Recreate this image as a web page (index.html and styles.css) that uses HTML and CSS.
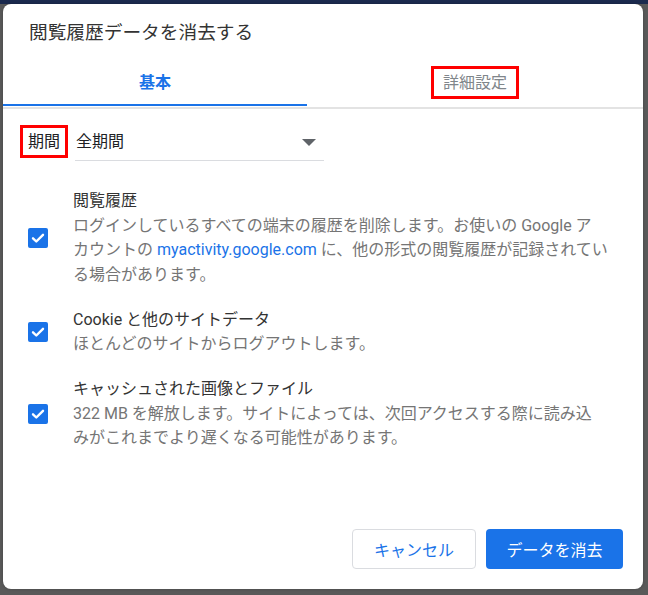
FILE: index.html
```html
<!DOCTYPE html>
<html lang="ja">
<head>
  <meta charset="UTF-8" />
  <title>閲覧履歴データを消去する</title>
  <link rel="stylesheet" href="styles.css">
</head>
<body>
  <div class="page-top"></div>

  <div class="dialog">
    <div class="dialog-title">閲覧履歴データを消去する</div>

    <div class="tabs">
      <div class="tab tab-basic active">基本</div>
      <div class="tab tab-advanced"><span class="mark mark-tab">詳細設定</span></div>
    </div>

    <div class="period-row">
      <span class="mark mark-label">期間</span>
      <div class="select">
        <span>全期間</span>
        <span class="arrow"></span>
      </div>
    </div>

    <div class="items">
      <div class="item">
        <div class="checkbox">
          <svg viewBox="0 0 20 20"><path d="M5 10.3l3.3 3.2L15 6.8" fill="none" stroke="#fff" stroke-width="2.4" stroke-linecap="round" stroke-linejoin="round"/></svg>
        </div>
        <div class="item-text">
          <div class="item-title">閲覧履歴</div>
          <div class="item-desc">ログインしているすべての端末の履歴を削除します。お使いの Google ア<br>カウントの <span class="link">myactivity.google.com</span> に、他の形式の閲覧履歴が記録されてい<br>る場合があります。</div>
        </div>
      </div>

      <div class="item">
        <div class="checkbox">
          <svg viewBox="0 0 20 20"><path d="M5 10.3l3.3 3.2L15 6.8" fill="none" stroke="#fff" stroke-width="2.4" stroke-linecap="round" stroke-linejoin="round"/></svg>
        </div>
        <div class="item-text">
          <div class="item-title">Cookie と他のサイトデータ</div>
          <div class="item-desc">ほとんどのサイトからログアウトします。</div>
        </div>
      </div>

      <div class="item">
        <div class="checkbox">
          <svg viewBox="0 0 20 20"><path d="M5 10.3l3.3 3.2L15 6.8" fill="none" stroke="#fff" stroke-width="2.4" stroke-linecap="round" stroke-linejoin="round"/></svg>
        </div>
        <div class="item-text">
          <div class="item-title">キャッシュされた画像とファイル</div>
          <div class="item-desc">322 MB を解放します。サイトによっては、次回アクセスする際に読み込<br>みがこれまでより遅くなる可能性があります。</div>
        </div>
      </div>
    </div>

    <div class="footer">
      <button class="btn btn-cancel">キャンセル</button>
      <button class="btn btn-primary">データを消去</button>
    </div>
  </div>
</body>
</html>
```

FILE: styles.css
```css
:root {
  --blue: #1a73e8;
  --text: #202124;
  --muted: #5f6368;
  --line: #dadce0;
  --mark: #ff0000;
}

html, body {
  margin: 0;
  padding: 0;
  height: 100%;
  overflow: hidden;
}

body {
  background: #595959;
  font-family: Roboto, "Noto Sans CJK JP", sans-serif;
  color: var(--text);
  padding: 4px 5px 0 3px;
  box-sizing: border-box;
  position: relative;
}

/* strip of the page behind the scrim */
.page-top {
  position: absolute;
  top: 0;
  left: 0;
  right: 0;
  height: 4px;
  background: #1b2a4e;
}

.dialog {
  position: relative;
  height: 585px;
  background: #fff;
  border-radius: 8px;
  display: flex;
  flex-direction: column;
  box-shadow: 0 0 3px rgba(0,0,0,0.25);
}

.dialog-title {
  font-size: 18.7px;
  line-height: 24px;
  padding: 17px 26px 0;
  color: #333;
}

/* Tabs */
.tabs {
  display: flex;
  margin-top: 13px;
  border-bottom: 2px solid #e3e3e3;
}
.tab {
  height: 46px;
  display: flex;
  align-items: center;
  justify-content: center;
  font-size: 16px;
  border-bottom: 2px solid transparent;
}
.tab-basic {
  width: 304px;
  color: var(--blue);
  font-weight: bold;
  border-bottom-color: var(--blue);
}
.tab-advanced {
  flex: 1;
  color: #80868b;
  padding-top: 1px;
}

/* red annotation boxes */
.mark {
  display: inline-block;
  border: 3px solid var(--mark);
  line-height: 21px;
}
.mark-tab { padding: 3px 9px; }
.mark-label { padding: 3px 5px; color: var(--text); }

/* Period */
.period-row {
  display: flex;
  align-items: flex-start;
  gap: 7px;
  margin-top: 16px;
  padding-left: 17px;
}
.select {
  width: 249px;
  margin-top: 5px;
  display: flex;
  align-items: center;
  justify-content: space-between;
  font-size: 16px;
  line-height: 24px;
  padding: 0 8px 6px 1px;
  box-sizing: border-box;
  border-bottom: 1px solid var(--line);
}
.arrow {
  width: 0;
  height: 0;
  border-left: 7px solid transparent;
  border-right: 7px solid transparent;
  border-top: 7px solid var(--muted);
}

/* Items */
.items {
  display: flex;
  flex-direction: column;
  gap: 20.5px;
  margin-top: 28px;
  padding-left: 25px;
}
.item {
  display: flex;
  align-items: center;
  gap: 25px;
}
.checkbox {
  width: 20px;
  height: 20px;
  flex-shrink: 0;
  background: var(--blue);
  border-radius: 2px;
}
.checkbox svg { display: block; width: 20px; height: 20px; }
.item-text {
  width: 560px;
  font-size: 16px;
  line-height: 24.5px;
  white-space: nowrap;
}
.item-title { color: #333; }
.item-desc { color: #757575; }
.link { color: var(--blue); }

/* Footer */
.footer {
  margin-top: auto;
  display: flex;
  justify-content: flex-end;
  gap: 10px;
  padding: 0 20px 20px 0;
}
.btn {
  font-family: Roboto, "Noto Sans CJK JP", sans-serif;
  font-size: 16px;
  height: 40px;
  border-radius: 4px;
  cursor: pointer;
}
.btn-cancel {
  width: 124px;
  background: #fff;
  color: var(--blue);
  border: 1px solid var(--line);
}
.btn-primary {
  width: 137px;
  background: var(--blue);
  color: #fff;
  border: none;
}
```
